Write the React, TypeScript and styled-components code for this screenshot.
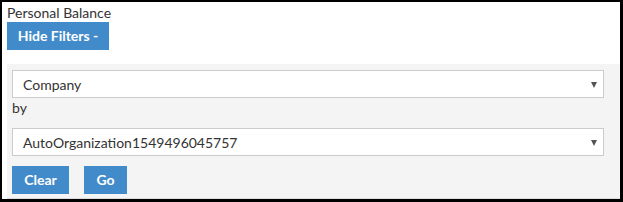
import React from "react";
import styled, { createGlobalStyle } from "styled-components";

const Global = createGlobalStyle`
  html, body { margin: 0; padding: 0; background: #fff; }
  body { font-family: Lato, "Open Sans", Arial, sans-serif; color: #333; }
  * { box-sizing: border-box; }
`;

const Frame = styled.div`
  width: 623px;
  height: 202px;
  border-style: solid;
  border-color: #000;
  border-width: 2px 3px 3px 2px;
  padding: 2px 0 0 5px;
  display: flex;
  flex-direction: column;
  background: #fff;
`;

const Title = styled.div`
  font-size: 14px;
  line-height: 18px;
  height: 18px;
  color: #333;
`;

const Button = styled.button<{ $w?: number }>`
  font-family: inherit;
  font-size: 14px;
  font-weight: 700;
  color: #fff;
  background: #428bca;
  border: none;
  border-radius: 0;
  height: 28px;
  padding: 0 13px;
  line-height: 28px;
  cursor: pointer;
  ${(p) => (p.$w ? `width: ${p.$w}px; padding: 0;` : "")}
`;

const TopRow = styled.div`
  display: flex;
`;

const Panel = styled.div`
  margin-top: 14px;
  background: #f4f4f4;
  border-bottom: 1px solid #dcdcdc;
  padding: 6px 16px 4px 5px;
  display: flex;
  flex-direction: column;
  flex: 1;
`;

const SelectBox = styled.div`
  position: relative;
  height: 28px;
  background: #fff;
  border: 1px solid #cbcbcb;
  display: flex;
  align-items: center;
  padding: 0 10px;
  font-size: 14px;
  color: #333;
`;

const Arrow = styled.span`
  position: absolute;
  right: 6px;
  top: 11px;
  width: 0;
  height: 0;
  border-left: 3.5px solid transparent;
  border-right: 3.5px solid transparent;
  border-top: 6px solid #555;
`;

const Label = styled.div`
  font-size: 14px;
  line-height: 20px;
  height: 20px;
  margin-bottom: 10px;
  color: #333;
`;

const Actions = styled.div`
  display: flex;
  gap: 15px;
  margin-top: 10px;
`;

const Select = ({ value }: { value: string }) => (
  <SelectBox>
    {value}
    <Arrow />
  </SelectBox>
);

export default function App() {
  return (
    <>
      <Global />
      <Frame>
        <Title>Personal Balance</Title>
        <TopRow>
          <Button $w={102}>Hide Filters -</Button>
        </TopRow>
        <Panel>
          <Select value="Company" />
          <Label>by</Label>
          <Select value="AutoOrganization1549496045757" />
          <Actions>
            <Button $w={57}>Clear</Button>
            <Button $w={43}>Go</Button>
          </Actions>
        </Panel>
      </Frame>
    </>
  );
}
